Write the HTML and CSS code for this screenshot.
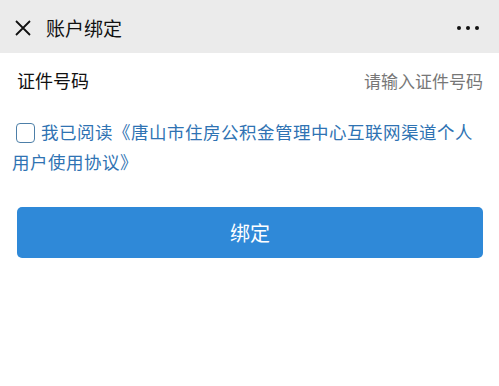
FILE: index.html
```html
<!DOCTYPE html>
<html lang="zh">
<head>
<meta charset="utf-8">
<link rel="stylesheet" href="styles.css">
</head>
<body>
<div class="page">
  <header class="topbar">
    <svg class="close" width="18" height="18" viewBox="0 0 18 18"><path d="M2 2 L16 16 M16 2 L2 16" stroke="#111" stroke-width="1.8" fill="none"/></svg>
    <span class="title">账户绑定</span>
    <span class="more"><i></i><i></i><i></i></span>
  </header>
  <div class="field">
    <span class="label">证件号码</span>
    <span class="placeholder">请输入证件号码</span>
  </div>
  <p class="agree"><span class="box"></span>我已阅读《唐山市住房公积金管理中心互联网渠道个人用户使用协议》</p>
  <div class="btnwrap"><button class="bind">绑定</button></div>
</div>
</body>
</html>
```
FILE: styles.css
```css
html, body { margin: 0; padding: 0; background: #fff; }
body { font-family: "Noto Sans CJK SC", "Noto Sans", sans-serif; width: 499px; height: 386px; overflow: hidden; }
.topbar { height: 53px; background: #ebebeb; display: flex; align-items: center; padding: 0 20px 0 14px; box-sizing: border-box; }
.close { width: 18px; height: 18px; margin-top: 3px; }
.title { margin-left: 14px; font-size: 19px; color: #111; margin-top: 2px; }
.more { margin-left: auto; display: flex; gap: 5px; margin-top: 2px; }
.more i { width: 4px; height: 4px; border-radius: 50%; background: #111; display: block; }
.field { height: 54px; display: flex; align-items: center; justify-content: space-between; padding: 0 16px 0 17px; }
.label { font-size: 18px; color: #111; }
.placeholder { font-size: 17px; color: #777; }
.agree { margin: 10px 0 0; padding: 0 14px 0 12px; font-size: 17.5px; letter-spacing: 0.5px; line-height: 30px; color: #2f73b3; }
.box { display: inline-block; border: 1.5px solid #4d7fa8; border-radius: 4px; vertical-align: -4px; margin: 0 6px 0 4px; box-sizing: border-box; width: 19px; height: 20px; }
.btnwrap { padding: 0 16px 0 17px; margin-top: 30px; }
.bind { width: 100%; height: 51px; border: 0; border-radius: 5px; background: #2f89d8; color: #fff; font-family: inherit; font-size: 20px; }
```
